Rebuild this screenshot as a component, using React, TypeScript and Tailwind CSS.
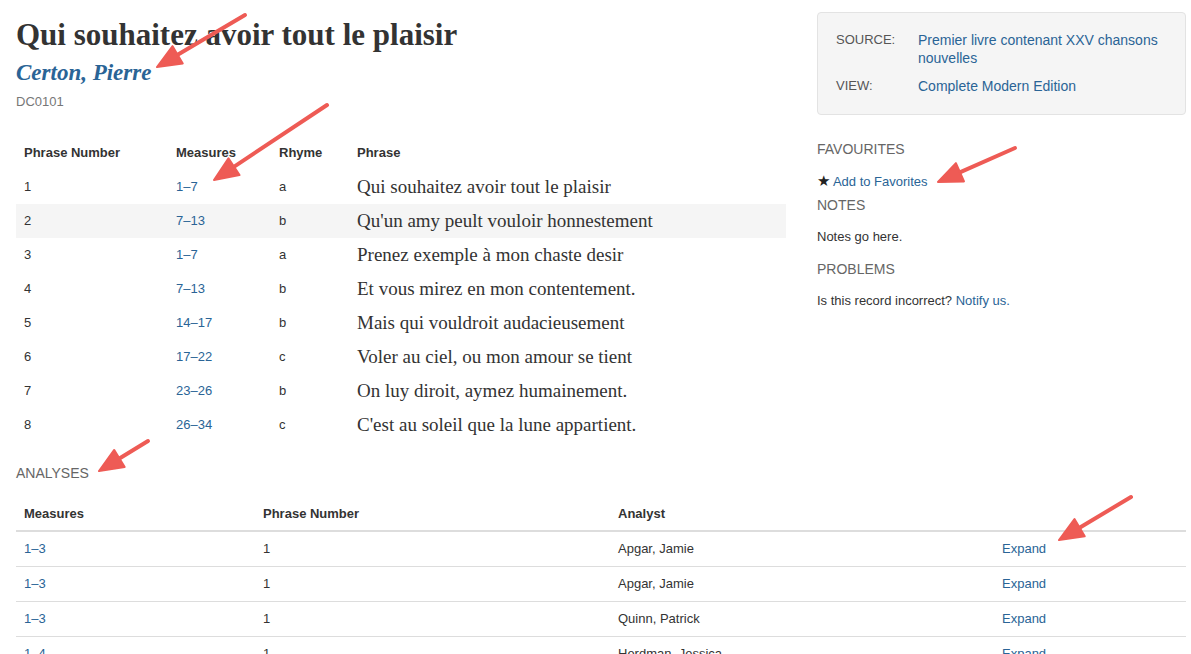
import React from 'react';

const phrases = [
  { n: '1', m: '1–7', r: 'a', p: 'Qui souhaitez avoir tout le plaisir' },
  { n: '2', m: '7–13', r: 'b', p: "Qu'un amy peult vouloir honnestement" },
  { n: '3', m: '1–7', r: 'a', p: 'Prenez exemple à mon chaste desir' },
  { n: '4', m: '7–13', r: 'b', p: 'Et vous mirez en mon contentement.' },
  { n: '5', m: '14–17', r: 'b', p: 'Mais qui vouldroit audacieusement' },
  { n: '6', m: '17–22', r: 'c', p: 'Voler au ciel, ou mon amour se tient' },
  { n: '7', m: '23–26', r: 'b', p: 'On luy diroit, aymez humainement.' },
  { n: '8', m: '26–34', r: 'c', p: "C'est au soleil que la lune appartient." },
];

const analyses = [
  { m: '1–3', n: '1', a: 'Apgar, Jamie' },
  { m: '1–3', n: '1', a: 'Apgar, Jamie' },
  { m: '1–3', n: '1', a: 'Quinn, Patrick' },
  { m: '1–4', n: '1', a: 'Herdman, Jessica' },
];

const arrows = [
  [245, 15, 157, 67],
  [327, 105, 214, 180],
  [1015, 148, 938, 182],
  [148, 441, 99, 471],
  [1131, 497, 1059, 540],
];

function Arrow({ x1, y1, x2, y2 }: { x1: number; y1: number; x2: number; y2: number }) {
  const dx = x2 - x1;
  const dy = y2 - y1;
  const len = Math.hypot(dx, dy);
  const ux = dx / len;
  const uy = dy / len;
  const hl = 24;
  const hw = 10;
  const bx = x2 - ux * hl;
  const by = y2 - uy * hl;
  const pts = `${x2},${y2} ${bx - uy * hw},${by + ux * hw} ${bx + uy * hw},${by - ux * hw}`;
  return (
    <g>
      <line x1={x1} y1={y1} x2={bx + ux * 2} y2={by + uy * 2} stroke="#ee5b55" strokeWidth={4} strokeLinecap="round" />
      <polygon points={pts} fill="#ee5b55" stroke="#ee5b55" strokeWidth={2} strokeLinejoin="round" />
    </g>
  );
}

const sans = "font-['Liberation_Sans',Arial,sans-serif]";
const serif = "font-['Liberation_Serif','Times_New_Roman',serif]";

export default function App() {
  return (
    <div className={`relative w-[1191px] h-[654px] overflow-hidden bg-white text-[#333] ${sans} text-[13px]`}>
      <div className="flex gap-[31px] pl-4 pr-[5px]">
        <div className="w-[770px] shrink-0">
          <h1 className={`${serif} pt-[17px] text-[31px] leading-[36px] font-bold text-[#333]`}>
            Qui souhaitez avoir tout le plaisir
          </h1>
          <a className={`${serif} block mt-[5px] text-[23px] leading-[30px] italic font-bold text-[#2a6496]`}>
            Certon, Pierre
          </a>
          <div className="mt-[4px] leading-[20px] text-[#777]">DC0101</div>
          <table className="mt-[24px] w-full border-collapse">
            <thead>
              <tr className="h-[34px] text-left">
                <th className="w-[152px] pl-2 font-bold">Phrase Number</th>
                <th className="w-[103px] pl-2 font-bold">Measures</th>
                <th className="w-[78px] pl-2 font-bold">Rhyme</th>
                <th className="pl-2 font-bold">Phrase</th>
              </tr>
            </thead>
            <tbody>
              {phrases.map((r, i) => (
                <tr key={i} className={i === 1 ? 'h-[34px] bg-[#f5f5f5]' : 'h-[34px]'}>
                  <td className="pl-2">{r.n}</td>
                  <td className="pl-2 text-[#2a6496]">{r.m}</td>
                  <td className="pl-2">{r.r}</td>
                  <td className={`pl-2 ${serif} text-[19px] text-[#333]`}>{r.p}</td>
                </tr>
              ))}
            </tbody>
          </table>
        </div>

        <div className="w-[369px] shrink-0 pt-3">
          <div className="rounded-[4px] border border-[#e3e3e3] bg-[#f5f5f5] pt-[18px] pb-[19px] pl-[18px] pr-4 leading-[18px]">
            <div className="flex">
              <div className="w-[82px] shrink-0 text-[#555]">SOURCE:</div>
              <a className="text-[#2a6496] text-[14px]">Premier livre contenant XXV chansons nouvelles</a>
            </div>
            <div className="flex mt-[10px]">
              <div className="w-[82px] shrink-0 text-[#555]">VIEW:</div>
              <a className="text-[#2a6496] text-[14px]">Complete Modern Edition</a>
            </div>
          </div>
          <div className="mt-[24px] text-[14px] leading-[20px] text-[#666]">FAVOURITES</div>
          <div className="mt-[13px] leading-[18px]">
            <span className="text-[15px] text-[#222]">★</span> <a className="text-[#2a6496]">Add to Favorites</a>
          </div>
          <div className="mt-[4px] text-[14px] leading-[20px] text-[#666]">NOTES</div>
          <div className="mt-[13px] leading-[18px]">Notes go here.</div>
          <div className="mt-[13px] text-[14px] leading-[20px] text-[#666]">PROBLEMS</div>
          <div className="mt-[13px] leading-[18px]">
            Is this record incorrect? <a className="text-[#2a6496]">Notify us.</a>
          </div>
        </div>
      </div>

      <div className="pl-4 pr-[5px]">
        <div className="mt-[21px] text-[14px] leading-[20px] text-[#666]">ANALYSES</div>
        <table className="mt-[14px] w-full border-collapse">
          <thead>
            <tr className="h-[34px] text-left border-b-2 border-[#ddd]">
              <th className="w-[239px] pl-2 font-bold">Measures</th>
              <th className="w-[355px] pl-2 font-bold">Phrase Number</th>
              <th className="w-[384px] pl-2 font-bold">Analyst</th>
              <th className="pl-2"></th>
            </tr>
          </thead>
          <tbody>
            {analyses.map((r, i) => (
              <tr key={i} className="h-[35px] border-b border-[#ddd]">
                <td className="pl-2 text-[#2a6496]">{r.m}</td>
                <td className="pl-2">{r.n}</td>
                <td className="pl-2">{r.a}</td>
                <td className="pl-2 text-[#2a6496]">Expand</td>
              </tr>
            ))}
          </tbody>
        </table>
      </div>

      <svg className="pointer-events-none absolute inset-0" width={1191} height={654}>
        {arrows.map(([x1, y1, x2, y2], i) => (
          <Arrow key={i} x1={x1} y1={y1} x2={x2} y2={y2} />
        ))}
      </svg>
    </div>
  );
}
